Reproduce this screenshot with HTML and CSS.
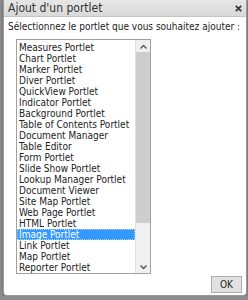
FILE: index.html
```html
<!DOCTYPE html>
<html lang="fr">
<head>
  <meta charset="UTF-8" />
  <meta name="viewport" content="width=device-width, initial-scale=1.0" />
  <title>Ajout d'un portlet</title>
  <link rel="stylesheet" href="styles.css">
</head>
<body>

  <div class="dialogue">
    <div class="titre">
      <span>Ajout d'un portlet</span>
      <svg class="fermer" width="7" height="7" viewBox="0 0 7 7"><path d="M0.8 0.8 L6.2 6.2 M6.2 0.8 L0.8 6.2" stroke="#3a3a3a" stroke-width="1.8"/></svg>
    </div>

    <div class="contenu">
      <p class="consigne">Sélectionnez le portlet que vous souhaitez ajouter :</p>

      <div class="liste">
        <ul class="options">
          <li>Measures Portlet</li>
          <li>Chart Portlet</li>
          <li>Marker Portlet</li>
          <li>Diver Portlet</li>
          <li>QuickView Portlet</li>
          <li>Indicator Portlet</li>
          <li>Background Portlet</li>
          <li>Table of Contents Portlet</li>
          <li>Document Manager</li>
          <li>Table Editor</li>
          <li>Form Portlet</li>
          <li>Slide Show Portlet</li>
          <li>Lookup Manager Portlet</li>
          <li>Document Viewer</li>
          <li>Site Map Portlet</li>
          <li>Web Page Portlet</li>
          <li>HTML Portlet</li>
          <li class="choisi">Image Portlet</li>
          <li>Link Portlet</li>
          <li>Map Portlet</li>
          <li>Reporter Portlet</li>
        </ul>
        <div class="defilement">
          <div class="fleche">
            <svg width="7" height="5" viewBox="0 0 7 5"><path d="M0.5 4.5 L3.5 1.5 L6.5 4.5" fill="none" stroke="#555" stroke-width="1.4"/></svg>
          </div>
          <div class="curseur"></div>
          <div class="piste"></div>
          <div class="fleche">
            <svg width="7" height="5" viewBox="0 0 7 5"><path d="M0.5 0.5 L3.5 3.5 L6.5 0.5" fill="none" stroke="#555" stroke-width="1.4"/></svg>
          </div>
        </div>
      </div>
    </div>

    <div class="pied">
      <button class="bouton">OK</button>
    </div>
  </div>

</body>
</html>
```

FILE: styles.css
```css
body {
  margin: 0;
  background: #8c8c8c;
  font-family: 'DejaVu Sans Condensed', 'DejaVu Sans', sans-serif;
  color: #222;
  overflow: hidden;
}

.dialogue {
  margin-left: 3px;
  width: 242px;
  height: 295px;
  background: #fff;
  border: 1px solid #9a9a9a;
  border-top: none;
  border-radius: 0 0 4px 4px;
  box-shadow: 0 1px 3px rgba(0,0,0,0.3);
  display: flex;
  flex-direction: column;
}

.titre {
  height: 16px;
  background: linear-gradient(#e6e6e6, #d9d9d9);
  border-bottom: 1px solid #c4c4c4;
  display: flex;
  justify-content: space-between;
  align-items: center;
  padding: 0 4px 0 4px;
  font-size: 12px;
  color: #333;
}

.fermer {
  margin-top: 1px;
}

.contenu {
  padding: 3px 4px 0 4px;
  flex: 1;
}

.consigne {
  margin: 0 0 5px 0;
  font-size: 10px;
  line-height: 14px;
  white-space: nowrap;
}

.liste {
  margin-left: 8px;
  width: 133px;
  height: 233px;
  border: 1px solid #a0a0a0;
  display: flex;
  overflow: hidden;
}

.options {
  list-style: none;
  margin: 0;
  padding: 2px 0 0 0;
  flex: 1;
  font-size: 10px;
}

.options li {
  height: 11px;
  line-height: 11px;
  padding-left: 2px;
  white-space: nowrap;
}

.options li.choisi {
  background: #3399ff;
  color: #fff;
  outline: 1px dotted #aad4ff;
  outline-offset: -1px;
}

.defilement {
  width: 14px;
  background: #f0f0f0;
  border-left: 1px solid #e0e0e0;
  display: flex;
  flex-direction: column;
}

.fleche {
  height: 12px;
  display: flex;
  align-items: center;
  justify-content: center;
}

.curseur {
  height: 171px;
  background: #cdcdcd;
}

.piste {
  flex: 1;
}

.pied {
  display: flex;
  justify-content: flex-end;
  padding: 0 4px 2px 0;
}

.bouton {
  width: 31px;
  height: 17px;
  padding: 0;
  font-family: 'DejaVu Sans Condensed', 'DejaVu Sans', sans-serif;
  font-size: 10px;
  color: #222;
  background: #e1e1e1;
  border: 1px solid #adadad;
  border-radius: 0;
}
```
